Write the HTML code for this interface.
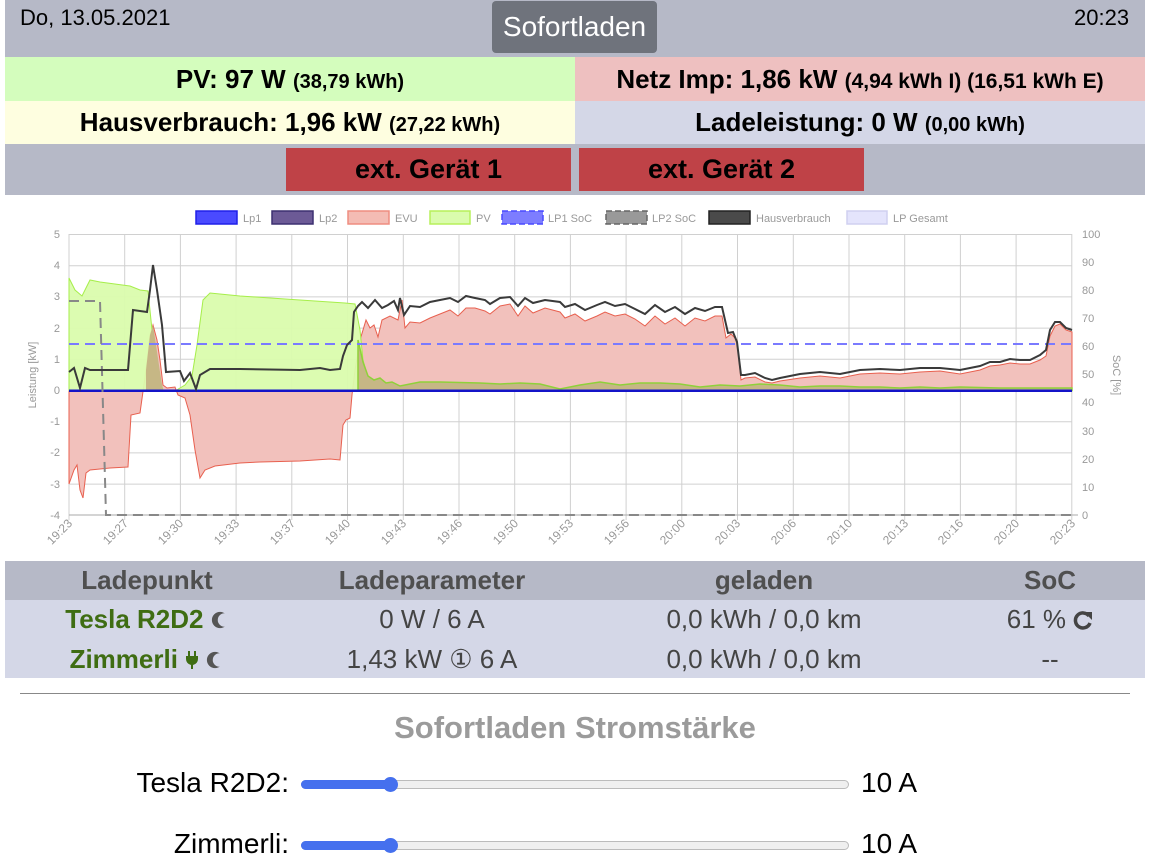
<!DOCTYPE html>
<html><head><meta charset="utf-8"><style>
*{margin:0;padding:0;box-sizing:border-box}
body{width:1165px;height:857px;overflow:hidden;background:#fff;font-family:"Liberation Sans",Arial,sans-serif;position:relative}
.a{position:absolute}
.c{display:flex;align-items:center;justify-content:center;font-weight:bold;color:#000}
.sm{font-size:20px}
.th{font-size:26px;font-weight:bold;color:#4f4f4f;text-align:center;position:absolute;width:300px}
.td{font-size:26px;color:#444;text-align:center;position:absolute;width:300px}
.g{color:#3f6d13;font-weight:bold}
</style></head><body>
<svg width="0" height="0" style="position:absolute"><defs><mask id="mm"><rect width="20" height="20" fill="#fff"/><circle cx="15" cy="10" r="7.5" fill="#000"/></mask></defs></svg>
<div class="a" style="left:5px;top:0;width:1140px;height:57px;background:#b6b9c7"></div>
<div class="a" style="left:20px;top:5px;font-size:22px">Do, 13.05.2021</div>
<div class="a" style="left:1074px;top:5px;font-size:22px">20:23</div>
<div class="a c" style="left:492px;top:1px;width:165px;height:52px;background:#6f737c;border-radius:4px;color:#fff;font-weight:normal;font-size:28px">Sofortladen</div>
<div class="a c" style="left:5px;top:57px;width:570px;height:44px;background:#d4fdbd;font-size:26px"><span>PV: 97 W <span class="sm">(38,79 kWh)</span></span></div>
<div class="a c" style="left:575px;top:57px;width:570px;height:44px;background:#eec0c0;font-size:26px"><span>Netz Imp: 1,86 kW <span class="sm" style="font-size:21px">(4,94 kWh I) (16,51 kWh E)</span></span></div>
<div class="a c" style="left:5px;top:101px;width:570px;height:43px;background:#fefee0;font-size:26px"><span>Hausverbrauch: 1,96 kW <span class="sm">(27,22 kWh)</span></span></div>
<div class="a c" style="left:575px;top:101px;width:570px;height:43px;background:#d4d7e7;font-size:26px"><span>Ladeleistung: 0 W <span class="sm">(0,00 kWh)</span></span></div>
<div class="a" style="left:5px;top:144px;width:1140px;height:51px;background:#b6b9c7"></div>
<div class="a c" style="left:286px;top:148px;width:285px;height:43px;background:#bf4247;font-size:27px">ext. Gerät 1</div>
<div class="a c" style="left:579px;top:148px;width:285px;height:43px;background:#bf4247;font-size:27px">ext. Gerät 2</div>

<svg class="a" style="left:0;top:0" width="1165" height="560" font-family="Liberation Sans,Arial,sans-serif">
<g stroke="#d0d0d0" stroke-width="1">
<line x1="69" y1="234.5" x2="1072" y2="234.5"/><line x1="69" y1="265.7" x2="1072" y2="265.7"/><line x1="69" y1="296.9" x2="1072" y2="296.9"/><line x1="69" y1="328.1" x2="1072" y2="328.1"/><line x1="69" y1="359.3" x2="1072" y2="359.3"/><line x1="69" y1="421.7" x2="1072" y2="421.7"/><line x1="69" y1="452.9" x2="1072" y2="452.9"/><line x1="69" y1="484.1" x2="1072" y2="484.1"/>
<line x1="69" y1="234" x2="69" y2="520"/><line x1="124.7" y1="234" x2="124.7" y2="520"/><line x1="180.4" y1="234" x2="180.4" y2="520"/><line x1="236.1" y1="234" x2="236.1" y2="520"/><line x1="291.8" y1="234" x2="291.8" y2="520"/><line x1="347.5" y1="234" x2="347.5" y2="520"/><line x1="403.3" y1="234" x2="403.3" y2="520"/><line x1="459" y1="234" x2="459" y2="520"/><line x1="514.7" y1="234" x2="514.7" y2="520"/><line x1="570.4" y1="234" x2="570.4" y2="520"/><line x1="626.1" y1="234" x2="626.1" y2="520"/><line x1="681.8" y1="234" x2="681.8" y2="520"/><line x1="737.5" y1="234" x2="737.5" y2="520"/><line x1="793.3" y1="234" x2="793.3" y2="520"/><line x1="849" y1="234" x2="849" y2="520"/><line x1="904.7" y1="234" x2="904.7" y2="520"/><line x1="960.4" y1="234" x2="960.4" y2="520"/><line x1="1016.1" y1="234" x2="1016.1" y2="520"/><line x1="1071.8" y1="234" x2="1071.8" y2="520"/>
</g>
<line x1="69" y1="515" x2="1078" y2="515" stroke="#aaa"/>
<polygon fill="#f2c1bc" stroke="#e8604f" stroke-width="1" points="69,390.5 69,484 74,470 77,465 80,490 83,498 86,473 90,470 110,468 128,467 131,415 140,413 146,370 150,335 153,325 157,340 160,360 163,385 167,388 175,387 178,395 185,398 190,415 195,450 200,478 205,470 215,466 240,463 260,462 300,461 330,459 340,460 343,425 346,420 350,418 352,395 355,370 360,340 366,320 370,328 374,325 378,337 382,320 390,316 398,320 402,300 405,328 410,322 420,323 430,318 440,314 450,310 458,316 466,308 475,308 485,311 490,314 500,306 510,304 518,316 525,306 533,313 545,308 560,312 565,318 575,314 585,321 597,316 605,312 615,316 625,314 635,319 645,326 655,316 665,324 675,318 685,326 695,318 705,321 715,316 722,316 726,338 731,334 737,340 741,380 745,378 755,377 765,382 772,383 780,381 800,378 820,376 840,378 860,374 880,373 900,374 920,372 940,371 960,374 980,370 990,366 1000,365 1010,363 1020,364 1030,364 1040,360 1046,356 1050,336 1055,326 1060,324 1066,330 1072,332 1072,390.5"/>
<polygon fill="#dafcad" fill-opacity="0.95" stroke="#a6ee4a" stroke-width="1" points="69,390.5 69,278 75,290 82,296 90,280 100,282 130,286 140,290 148,291 152,330 157,370 163,390 175,391 185,385 192,376 197,345 203,300 210,293 240,296 300,300 345,303 355,304 360,330 363,360 368,378 375,385 380,382 385,388 400,388 404,390.5"/>
<polygon fill="#c6b785" points="146,390.5 146,370 150,335 153,325 156,345 160,372 163,390.5"/>
<polygon fill="#c6b785" stroke="#8fd13a" stroke-width="1.5" points="358,390.5 358,340 363,362 368,376 374,380 380,378 386,383 392,382 400,386 405,385 420,382 440,382 480,383 500,384 520,383 540,384 560,389 580,385 600,382 620,385 640,383 660,383 680,384 700,387 720,385 740,386 760,384 780,385 800,387 820,386 840,386 860,387 880,387 900,388 920,387 940,388 960,387 1000,388 1040,388 1072,388 1072,390.5"/>
<line x1="69" y1="390.7" x2="1072" y2="390.7" stroke="#1414c8" stroke-width="2.5"/>
<line x1="69" y1="344" x2="1072" y2="344" stroke="#7a7aff" stroke-width="2" stroke-dasharray="10,6"/>
<polyline fill="none" stroke="#888" stroke-width="2" stroke-dasharray="10,6" points="69,301 100,301 106,515 1072,515"/>
<polyline fill="none" stroke="#3a3a3a" stroke-width="2" points="69,372 74,368 80,388 85,368 90,370 128,370 133,310 147,312 150,290 153,265 157,290 162,325 166,372 180,371 184,381 190,373 196,389 200,375 210,369 240,369 300,370 320,368 330,370 340,369 343,356 347,345 352,340 354,312 358,306 362,302 368,308 375,300 382,308 388,305 394,301 398,310 400,298 404,315 410,306 420,307 430,302 440,300 450,298 458,302 466,296 475,298 485,300 490,304 500,298 510,297 518,306 525,298 533,303 545,300 560,302 565,307 575,304 585,310 597,305 605,302 615,306 625,304 635,309 645,314 655,305 665,312 675,307 685,314 695,308 705,311 715,307 722,307 728,333 733,332 737,342 741,375 745,375 755,373 765,378 772,380 780,378 800,374 820,372 840,374 860,370 880,369 900,370 920,368 940,368 960,370 980,366 990,362 1000,362 1010,359 1020,360 1030,360 1040,355 1046,350 1050,330 1055,322 1060,322 1066,328 1072,330"/>
<g font-size="11" fill="#999">
<rect x="196" y="211" width="41" height="13" fill="#4a4aff" stroke="#2020e8" stroke-width="1.5"/><text x="243" y="222">Lp1</text>
<rect x="272" y="211" width="41" height="13" fill="#6c5a96" stroke="#3d3070" stroke-width="1.5"/><text x="319" y="222">Lp2</text>
<rect x="348" y="211" width="41" height="13" fill="#f4bcb4" stroke="#ef8d80" stroke-width="1.5"/><text x="395" y="222">EVU</text>
<rect x="430" y="211" width="40" height="13" fill="#dafcad" stroke="#b7f05a" stroke-width="1.5"/><text x="476" y="222">PV</text>
<rect x="502" y="211" width="41" height="13" fill="#7d7dff" stroke="#4a4aff" stroke-width="1.5" stroke-dasharray="6,3"/><text x="548" y="222">LP1 SoC</text>
<rect x="606" y="211" width="41" height="13" fill="#999" stroke="#666" stroke-width="1.5" stroke-dasharray="6,3"/><text x="652" y="222">LP2 SoC</text>
<rect x="709" y="211" width="41" height="13" fill="#4a4a4a" stroke="#222" stroke-width="1.5"/><text x="756" y="222">Hausverbrauch</text>
<rect x="847" y="211" width="40" height="13" fill="#e4e4fc" stroke="#d0d0f0" stroke-width="1.5"/><text x="893" y="222">LP Gesamt</text>
</g>
<g font-size="11" fill="#999" text-anchor="end">
<text x="60" y="238">5</text><text x="60" y="269">4</text><text x="60" y="300">3</text><text x="60" y="332">2</text><text x="60" y="363">1</text><text x="60" y="394">0</text><text x="60" y="425">-1</text><text x="60" y="456">-2</text><text x="60" y="488">-3</text><text x="60" y="519">-4</text>
</g>
<g font-size="11" fill="#999">
<text x="1082" y="238">100</text><text x="1082" y="266">90</text><text x="1082" y="294">80</text><text x="1082" y="322">70</text><text x="1082" y="350">60</text><text x="1082" y="378">50</text><text x="1082" y="406">40</text><text x="1082" y="435">30</text><text x="1082" y="463">20</text><text x="1082" y="491">10</text><text x="1082" y="519">0</text>
</g>
<text x="0" y="0" font-size="11" fill="#999" text-anchor="middle" transform="translate(36,375) rotate(-90)">Leistung [kW]</text>
<text x="0" y="0" font-size="11" fill="#999" text-anchor="middle" transform="translate(1113,375) rotate(90)">SoC [%]</text>
<g font-size="12" fill="#999" text-anchor="end">
<text transform="translate(73,524) rotate(-45)">19:23</text><text transform="translate(129,524) rotate(-45)">19:27</text><text transform="translate(184,524) rotate(-45)">19:30</text><text transform="translate(240,524) rotate(-45)">19:33</text><text transform="translate(296,524) rotate(-45)">19:37</text><text transform="translate(351,524) rotate(-45)">19:40</text><text transform="translate(407,524) rotate(-45)">19:43</text><text transform="translate(463,524) rotate(-45)">19:46</text><text transform="translate(519,524) rotate(-45)">19:50</text><text transform="translate(574,524) rotate(-45)">19:53</text><text transform="translate(630,524) rotate(-45)">19:56</text><text transform="translate(686,524) rotate(-45)">20:00</text><text transform="translate(741,524) rotate(-45)">20:03</text><text transform="translate(797,524) rotate(-45)">20:06</text><text transform="translate(853,524) rotate(-45)">20:10</text><text transform="translate(909,524) rotate(-45)">20:13</text><text transform="translate(964,524) rotate(-45)">20:16</text><text transform="translate(1020,524) rotate(-45)">20:20</text><text transform="translate(1076,524) rotate(-45)">20:23</text>
</g>
</svg>

<div class="a" style="left:5px;top:561px;width:1140px;height:39px;background:#b6b9c7"></div>
<div class="a" style="left:5px;top:600px;width:1140px;height:78px;background:#d4d7e7"></div>
<div class="th" style="left:-3px;top:565px">Ladepunkt</div>
<div class="th" style="left:282px;top:565px">Ladeparameter</div>
<div class="th" style="left:614px;top:565px">geladen</div>
<div class="th" style="left:900px;top:565px">SoC</div>
<div class="td g" style="left:-3px;top:604px">Tesla R2D2 <svg width="18" height="20" viewBox="0 0 20 20" style="vertical-align:-2px"><circle cx="10" cy="10" r="9" fill="#555" mask="url(#mm)"/></svg></div>
<div class="td g" style="left:-3px;top:644px">Zimmerli <svg width="14" height="20" viewBox="0 0 14 20" style="vertical-align:-2px"><path d="M3 1h2v5h4V1h2v5h2v3a6 6 0 0 1-5 6v4H6v-4A6 6 0 0 1 1 9V6h2z" fill="#3f6d13"/></svg> <svg width="18" height="20" viewBox="0 0 20 20" style="vertical-align:-2px"><circle cx="10" cy="10" r="9" fill="#555" mask="url(#mm)"/></svg></div>
<div class="td" style="left:282px;top:604px">0 W / 6 A</div>
<div class="td" style="left:282px;top:644px">1,43 kW &#9312; 6 A</div>
<div class="td" style="left:614px;top:604px">0,0 kWh / 0,0 km</div>
<div class="td" style="left:614px;top:644px">0,0 kWh / 0,0 km</div>
<div class="td" style="left:900px;top:604px">61 % <svg width="20" height="20" viewBox="0 0 20 20" style="vertical-align:-2px"><path d="M16 6A7.5 7.5 0 1 0 17 13" fill="none" stroke="#444" stroke-width="3.5"/><path d="M11 2h8v8z" fill="#444"/></svg></div>
<div class="td" style="left:900px;top:644px">--</div>

<div class="a" style="left:20px;top:693px;width:1110px;height:1px;background:#888"></div>
<div class="a" style="left:0;top:710px;width:1150px;text-align:center;font-size:31px;font-weight:bold;color:#9b9b9b">Sofortladen Stromstärke</div>

<div class="a" style="left:0;top:767px;width:289px;text-align:right;font-size:28px;color:#000">Tesla R2D2:</div>
<div class="a" style="left:301px;top:780px;width:548px;height:9px;border-radius:5px;background:#efefef;border:1px solid #bbb"></div>
<div class="a" style="left:301px;top:780px;width:90px;height:9px;border-radius:5px;background:#4570ee"></div>
<div class="a" style="left:383px;top:777px;width:15px;height:15px;border-radius:50%;background:#4570ee"></div>
<div class="a" style="left:861px;top:767px;font-size:28px;color:#000">10 A</div>

<div class="a" style="left:0;top:828px;width:289px;text-align:right;font-size:28px;color:#000">Zimmerli:</div>
<div class="a" style="left:301px;top:841px;width:548px;height:9px;border-radius:5px;background:#efefef;border:1px solid #bbb"></div>
<div class="a" style="left:301px;top:841px;width:90px;height:9px;border-radius:5px;background:#4570ee"></div>
<div class="a" style="left:383px;top:838px;width:15px;height:15px;border-radius:50%;background:#4570ee"></div>
<div class="a" style="left:861px;top:828px;font-size:28px;color:#000">10 A</div>
</body></html>
